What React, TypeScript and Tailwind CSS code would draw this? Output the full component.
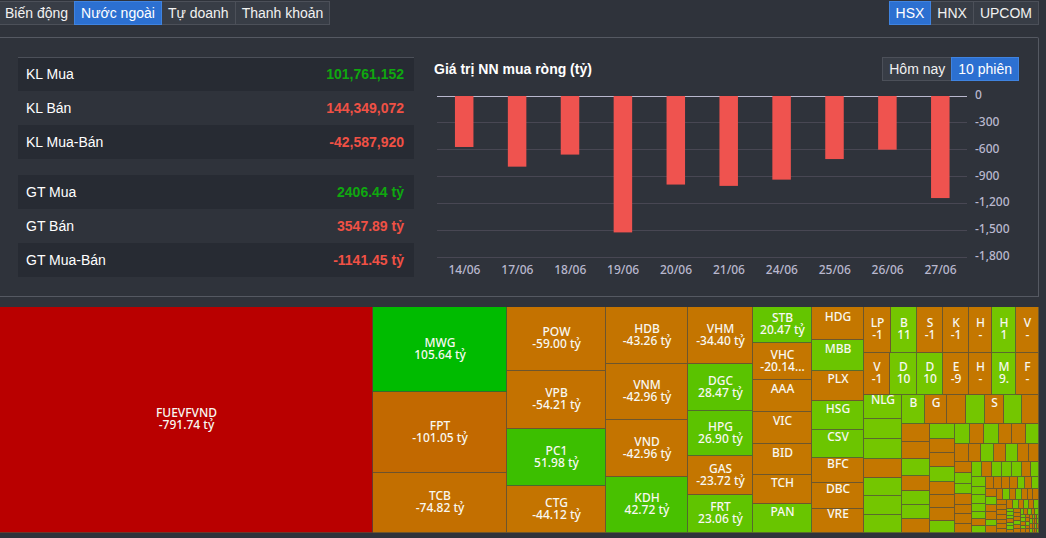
import { useState } from 'react';
import clsx from 'clsx';

type Direction = 'row' | 'col';

interface TreeLeaf {
  size: number;
  color: string;
  name?: string;
  value?: string;
}

interface TreeGroup {
  size: number;
  dir: Direction;
  children: TreeNode[];
}

type TreeNode = TreeLeaf | TreeGroup;

const COLORS: Record<string, string> = {
  g: '#74c600',
  o: '#c47700',
};

const leaf = (size: number, color: string, name?: string, value?: string): TreeLeaf => ({
  size,
  color: COLORS[color] ?? color,
  name,
  value,
});

const col = (size: number, ...children: TreeNode[]): TreeGroup => ({ size, dir: 'col', children });
const row = (size: number, ...children: TreeNode[]): TreeGroup => ({ size, dir: 'row', children });

// one colour letter per cell, sizes in the same order
const strip = (dir: Direction, size: number, colors: string, sizes?: number[], names: string[] = []): TreeGroup => ({
  size,
  dir,
  children: colors.split('').map((c, i) => leaf(sizes ? sizes[i] : 1, c, names[i])),
});

const smallest = row(
  55,
  strip('col', 16, 'ggogo'),
  strip('col', 13, 'oogoo'),
  col(26, strip('row', 14, 'ogog'), strip('row', 14, 'goog'), strip('row', 14, 'oogo'), strip('row', 13, 'goog')),
);

const tiny = col(
  126,
  strip('row', 34, 'ogogooo', [19, 19, 19, 18, 17, 17, 17]),
  row(
    98,
    strip('col', 30, 'ooooooo', [14, 15, 15, 14, 14, 13, 13]),
    col(
      96,
      strip('row', 25, 'ogogog', [18, 17, 17, 15, 15, 14]),
      row(
        73,
        strip('col', 21, 'gggoggo'),
        strip('col', 20, 'ooogoo'),
        col(55, strip('row', 18, 'gogog'), smallest),
      ),
    ),
  ),
);

const small = col(
  84,
  strip('row', 20, 'gogoog', [15, 14, 15, 13, 14, 13]),
  row(
    89,
    col(
      84,
      strip('row', 18, 'oogogoo', [14, 12, 13, 12, 12, 11, 10]),
      row(
        71,
        strip('col', 17, 'oggoooo', [11, 11, 10, 11, 9, 10, 9]),
        col(
          67,
          strip('row', 46, 'gogggog', [10, 10, 10, 10, 10, 9, 8]),
          row(
            167,
            strip('col', 42, 'gggggog', [28, 26, 25, 24, 22, 21, 21]),
            col(
              159,
              strip('row', 35, 'oooogog', [24, 24, 24, 24, 20, 23, 20]),
              row(132, strip('col', 33, 'ogoogo', [24, 24, 21, 23, 20, 20]), tiny),
            ),
          ),
        ),
      ),
    ),
  ),
);

const tree = row(
  1,
  leaf(373, '#b90000', 'FUEVFVND', '-791.74 tỷ'),
  col(134, leaf(85, '#00bb00', 'MWG', '105.64 tỷ'), leaf(81, '#c26900', 'FPT', '-101.05 tỷ'), leaf(60, '#c36f00', 'TCB', '-74.82 tỷ')),
  col(
    99,
    leaf(64, '#c47200', 'POW', '-59.00 tỷ'),
    leaf(58, '#c47200', 'VPB', '-54.21 tỷ'),
    leaf(57, '#3cbf00', 'PC1', '51.98 tỷ'),
    leaf(47, '#c47400', 'CTG', '-44.12 tỷ'),
  ),
  col(
    82,
    leaf(57, '#c47400', 'HDB', '-43.26 tỷ'),
    leaf(56, '#c47400', 'VNM', '-42.96 tỷ'),
    leaf(57, '#c47400', 'VND', '-42.96 tỷ'),
    leaf(56, '#48c100', 'KDH', '42.72 tỷ'),
  ),
  col(
    65,
    leaf(57, '#c47500', 'VHM', '-34.40 tỷ'),
    leaf(47, '#5ac300', 'DGC', '28.47 tỷ'),
    leaf(45, '#5cc300', 'HPG', '26.90 tỷ'),
    leaf(39, '#c47600', 'GAS', '-23.72 tỷ'),
    leaf(38, '#60c400', 'FRT', '23.06 tỷ'),
  ),
  col(
    59,
    leaf(36, '#64c500', 'STB', '20.47 tỷ'),
    leaf(37, '#c47600', 'VHC', '-20.14...'),
    leaf(32, 'o', 'AAA'),
    leaf(32, 'o', 'VIC'),
    leaf(31, 'o', 'BID'),
    leaf(29, 'o', 'TCH'),
    leaf(29, '#69c500', 'PAN'),
  ),
  col(
    52,
    leaf(33, 'o', 'HDG'),
    leaf(31, '#6bc500', 'MBB'),
    leaf(30, 'o', 'PLX'),
    leaf(29, '#6cc500', 'HSG'),
    leaf(28, '#6cc500', 'CSV'),
    leaf(25, 'o', 'BFC'),
    leaf(26, 'o', 'DBC'),
    leaf(24, 'o', 'VRE'),
  ),
  col(
    175,
    row(
      46,
      leaf(27, 'o', 'LP', '-1'),
      leaf(26, 'g', 'B', '11'),
      leaf(26, 'o', 'S', '-1'),
      leaf(26, 'o', 'K', '-1'),
      leaf(23, 'o', 'H', '-'),
      leaf(24, 'g', 'H', '1'),
      leaf(23, 'o', 'V', '-'),
    ),
    row(
      42,
      leaf(26, 'o', 'V', '-1'),
      leaf(27, 'g', 'D', '10'),
      leaf(26, 'g', 'D', '10'),
      leaf(26, 'o', 'E', '-9'),
      leaf(23, 'o', 'H', '-'),
      leaf(24, 'g', 'M', '9.'),
      leaf(23, 'o', 'F', '-'),
    ),
    row(
      138,
      strip('col', 38, 'gggoggg', [24, 20, 20, 19, 18, 19, 18], ['NLG']),
      col(
        137,
        strip('row', 29, 'googogo', [23, 22, 19, 19, 19, 18, 17], ['B', 'G', '', '', 'S']),
        row(
          109,
          strip('col', 28, 'oogoggo', [18, 17, 17, 15, 14, 14, 14]),
          row(109, strip('col', 25, 'googooog', [15, 14, 14, 15, 13, 13, 13, 12]), small),
        ),
      ),
    ),
  ),
);

function TreeCell({ node }: { node: TreeNode }) {
  if ('children' in node) {
    return (
      <div
        className={clsx('flex min-h-0 min-w-0 basis-0', node.dir === 'col' ? 'flex-col' : 'flex-row')}
        style={{ flexGrow: node.size }}
      >
        {node.children.map((child, i) => (
          <TreeCell key={i} node={child} />
        ))}
      </div>
    );
  }
  return (
    <div
      className="flex min-h-0 min-w-0 basis-0 items-center justify-center shadow-[inset_-1px_-1px_0_rgba(80,76,60,0.75)]"
      style={{ flexGrow: node.size, backgroundColor: node.color }}
    >
      {node.name && (
        <div className="flex flex-col items-center pb-0.5 text-xs leading-3 font-medium whitespace-nowrap text-[#f8f8f2]">
          <span>{node.name}</span>
          <span className="h-3">{node.value}</span>
        </div>
      )}
    </div>
  );
}

interface ButtonGroupProps {
  options: string[];
  value: string;
  onChange: (v: string) => void;
  flushLeft?: boolean;
}

function ButtonGroup({ options, value, onChange, flushLeft }: ButtonGroupProps) {
  return (
    <div className="flex">
      {options.map((option, i) => (
        <button
          key={option}
          type="button"
          aria-pressed={option === value}
          onClick={() => onChange(option)}
          className={clsx(
            'h-6 border text-sm leading-5 whitespace-nowrap',
            i > 0 && '-ml-px',
            flushLeft && i === 0 ? 'border-l-0 pr-1.5 pl-[5px]' : 'px-1.5',
            option === value
              ? 'relative border-[#3f83e0] bg-[#2c70d1] text-white'
              : 'border-[#4c5059] bg-[#383d46] text-[#f1f1f1]',
          )}
        >
          {option}
        </button>
      ))}
    </div>
  );
}

const VOLUME_ROWS = [
  { label: 'KL Mua', value: '101,761,152', up: true },
  { label: 'KL Bán', value: '144,349,072', up: false },
  { label: 'KL Mua-Bán', value: '-42,587,920', up: false },
];

const VALUE_ROWS = [
  { label: 'GT Mua', value: '2406.44 tỷ', up: true },
  { label: 'GT Bán', value: '3547.89 tỷ', up: false },
  { label: 'GT Mua-Bán', value: '-1141.45 tỷ', up: false },
];

function StatTable({ rows, topLine }: { rows: typeof VOLUME_ROWS; topLine?: boolean }) {
  return (
    <table className="w-full border-collapse text-sm">
      <tbody>
        {rows.map((r) => (
          <tr
            key={r.label}
            className={clsx('h-[34px] odd:bg-[#272b33]', topLine && 'first:shadow-[inset_0_1px_0_#4c5059]')}
          >
            <th scope="row" className="px-2 py-0 text-left font-normal text-white">
              {r.label}
            </th>
            <td className={clsx('py-0 pr-2.5 text-right font-bold', r.up ? 'text-[#0fa80f]' : 'text-[#f05145]')}>
              {r.value}
            </td>
          </tr>
        ))}
      </tbody>
    </table>
  );
}

const SESSIONS = [
  { date: '14/06', value: -570 },
  { date: '17/06', value: -790 },
  { date: '18/06', value: -655 },
  { date: '19/06', value: -1525 },
  { date: '20/06', value: -990 },
  { date: '21/06', value: -1005 },
  { date: '24/06', value: -935 },
  { date: '25/06', value: -705 },
  { date: '26/06', value: -600 },
  { date: '27/06', value: -1141 },
];

const TICKS = [0, -300, -600, -900, -1200, -1500, -1800];

const CHART = { left: 4, right: 533, top: 11, height: 161 };

function NetBuyChart() {
  const band = (CHART.right - CHART.left) / SESSIONS.length;
  const yOf = (v: number) => CHART.top + (-v / 1800) * CHART.height;

  return (
    <svg viewBox="0 0 585 196" className="block w-full font-['Noto_Sans',sans-serif]" role="img" aria-label="Giá trị NN mua ròng">
      {TICKS.map((t) => (
        <g key={t}>
          <rect
            x={CHART.left - 1}
            y={Math.floor(yOf(t))}
            width={CHART.right - CHART.left + 1}
            height={1}
            fill={t === 0 ? '#b9b8ce' : '#484753'}
          />
          <text x={541} y={Math.round(yOf(t)) + 3} fontSize={12} fontWeight={500} fill="#b9b8ce">
            {t.toLocaleString('en-US')}
          </text>
        </g>
      ))}
      {SESSIONS.map((s, i) => {
        const center = CHART.left + band * (i + 0.5);
        return (
          <g key={s.date}>
            <rect x={center - 9.5} y={CHART.top} width={18.5} height={yOf(s.value) - CHART.top} fill="#ef534f" />
            <text x={center} y={189} fontSize={12} fontWeight={500} textAnchor="middle" fill="#b9b8ce">
              {s.date}
            </text>
          </g>
        );
      })}
    </svg>
  );
}

export default function App() {
  const [tab, setTab] = useState('Nước ngoài');
  const [market, setMarket] = useState('HSX');
  const [range, setRange] = useState('10 phiên');

  return (
    <main className="flex min-h-screen flex-col bg-[#2f333b] pt-px pr-[7px] pb-[5px] font-['Liberation_Sans',Arial,sans-serif]">
      <div className="flex justify-between">
        <ButtonGroup options={['Biến động', 'Nước ngoài', 'Tự doanh', 'Thanh khoản']} value={tab} onChange={setTab} flushLeft />
        <ButtonGroup options={['HSX', 'HNX', 'UPCOM']} value={market} onChange={setMarket} />
      </div>

      <section className="mt-3 grid grid-cols-[396fr_585fr] gap-5 rounded-tr-xs border border-l-0 border-[#555962] pt-[19px] pr-[19px] pb-[15px] pl-[18px]">
        <div className="flex flex-col gap-4">
          <StatTable rows={VOLUME_ROWS} topLine />
          <StatTable rows={VALUE_ROWS} />
        </div>

        <div>
          <div className="flex items-center justify-between">
            <h2 className="text-sm font-bold text-white">Giá trị NN mua ròng (tỷ)</h2>
            <ButtonGroup options={['Hôm nay', '10 phiên']} value={range} onChange={setRange} />
          </div>
          <div className="mt-1">
            <NetBuyChart />
          </div>
        </div>
      </section>

      <div className="mt-2.5 flex min-h-[226px] flex-1 font-['Noto_Sans',sans-serif]">
        <TreeCell node={tree} />
      </div>
    </main>
  );
}
